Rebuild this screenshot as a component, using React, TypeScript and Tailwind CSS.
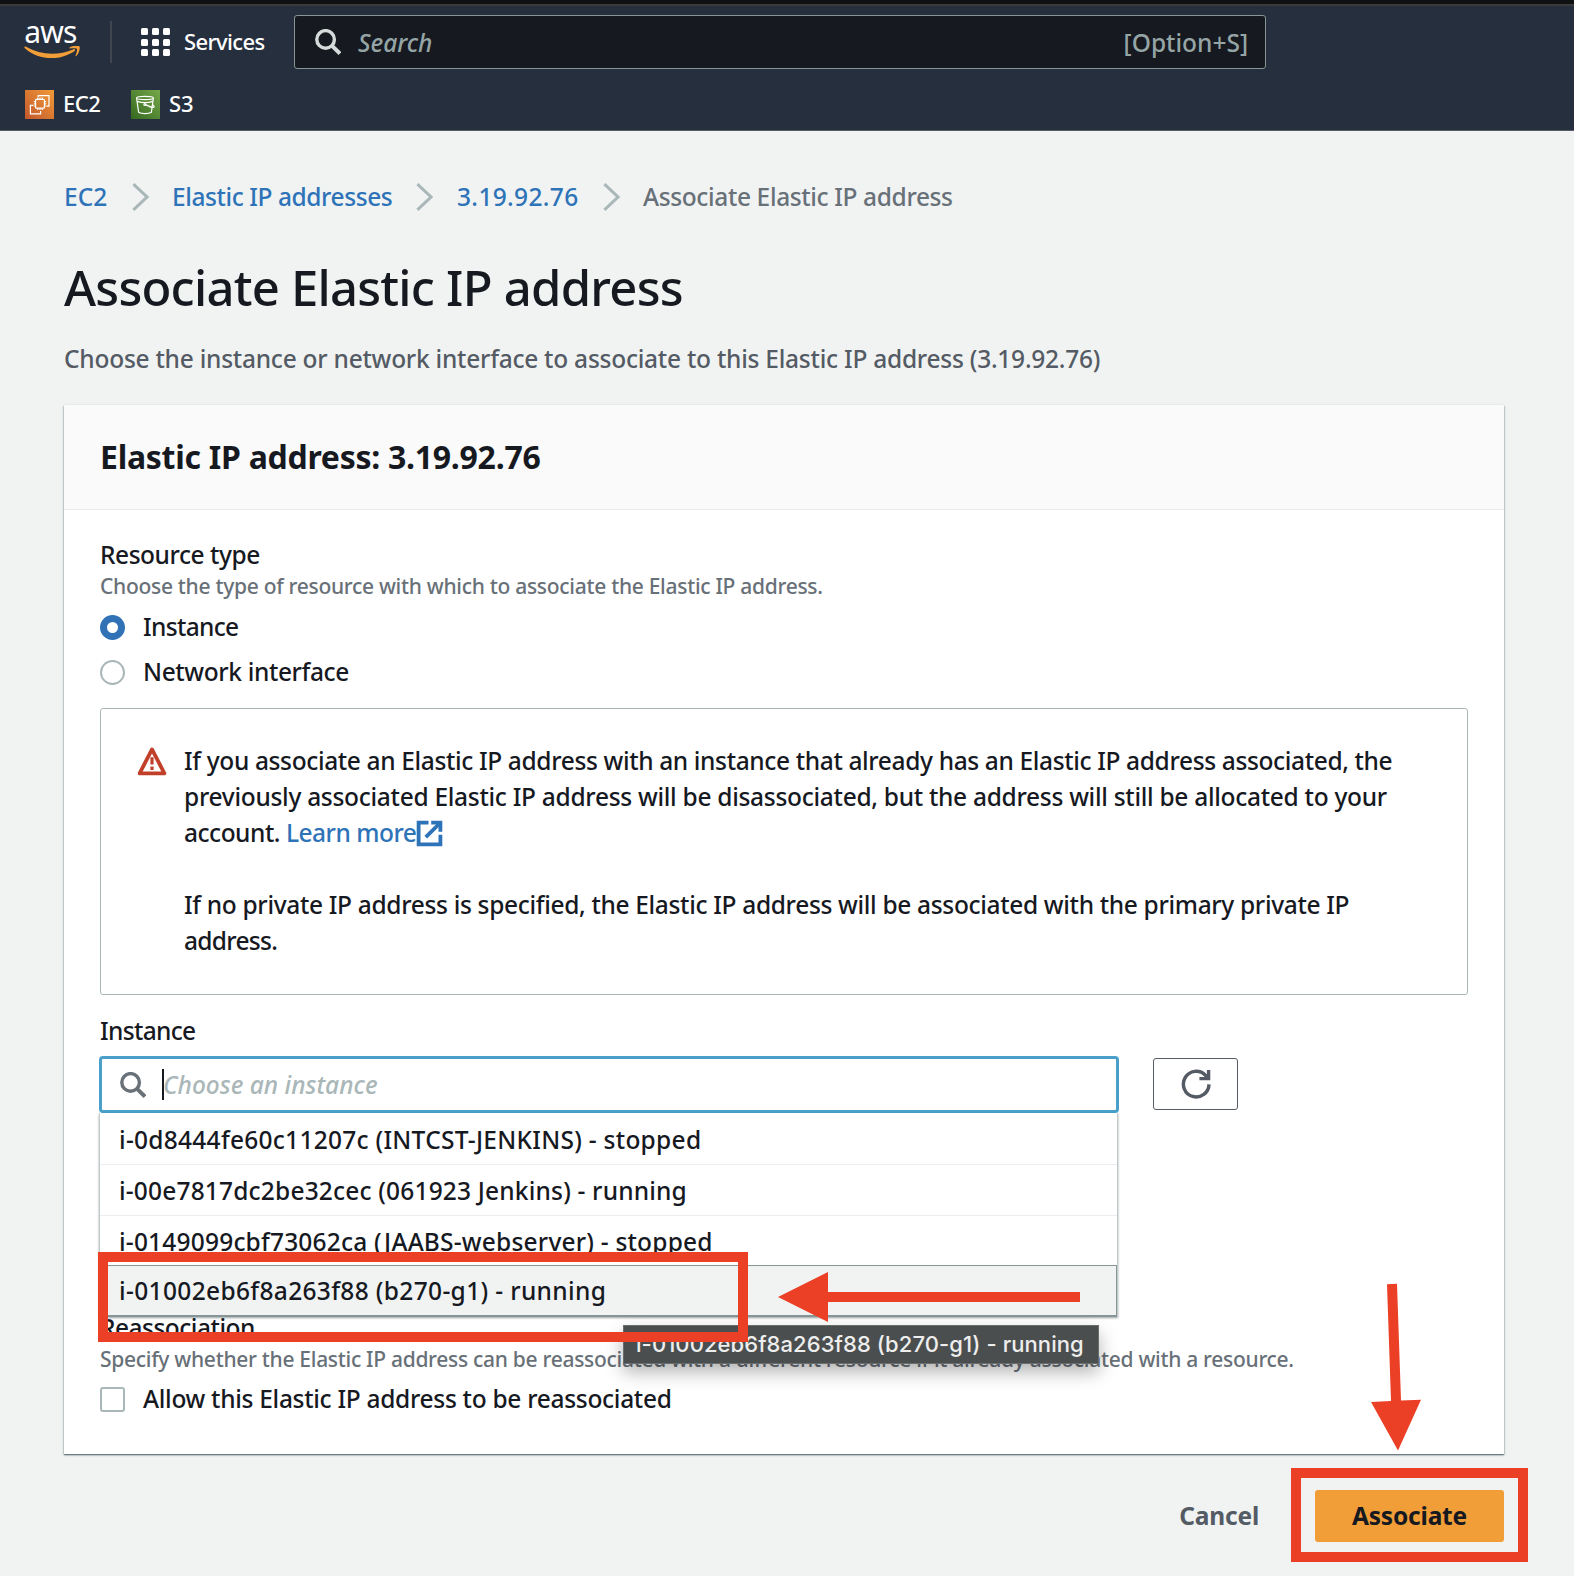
import type { ReactNode } from "react";

const instances = [
  { label: "i-0d8444fe60c11207c (INTCST-JENKINS) - stopped", style: "h-[52px] border-b border-[#eaeded] pt-[3px] tracking-[0.27px]" },
  { label: "i-00e7817dc2be32cec (061923 Jenkins) - running", style: "h-[51px] border-b border-[#eaeded] pt-px tracking-[0.18px]" },
  { label: "i-0149099cbf73062ca (JAABS-webserver) - stopped", style: "h-[49px] pt-0.5 tracking-[0.2px]" },
];

function SearchIcon({ className }: { className: string }) {
  return (
    <svg viewBox="0 0 26 26" className={className} fill="none" stroke="currentColor">
      <circle cx="10.6" cy="10.4" r="8.8" strokeWidth="3.4" />
      <path d="M16.8 16.6 L25 24.6" strokeWidth="4" />
    </svg>
  );
}

function AwsLogo() {
  return (
    <div className="flex h-9 w-14 flex-col items-center">
      <span className="mt-[-13px] -ml-[3px] h-[35px] text-[30px] leading-[42px] font-normal tracking-[-0.8px] text-white">aws</span>
      <svg viewBox="0 0 56 14" className="h-[14px] w-14 shrink-0" fill="#f19e38">
        <path d="M0.3 1.2 C0.3 0.4 1.2 0.3 2 0.8 C17 9.4 34 9.8 49.6 3.2 C51 2.7 51.8 4 50.6 4.9 C36 15.2 14.5 14.6 0.6 1.9 Z" />
        <path d="M45.6 1.4 C48.4 -0.5 54.6 -0.7 55.5 0.4 C56.4 1.5 55.2 7.6 52.2 10 C51.7 10.4 51.2 10.2 51.5 9.5 C52.2 7.8 53.6 4 52.9 3 C52.2 2.1 48.2 2.3 46.2 2.4 C45.2 2.5 44.9 1.9 45.6 1.4 Z" />
      </svg>
    </div>
  );
}

function GridIcon() {
  return (
    <div className="grid grid-cols-3 gap-x-[4px] gap-y-[3.5px]">
      {Array.from({ length: 9 }, (_, i) => (
        <span key={i} className="size-[7px] rounded-[1.5px] bg-white" />
      ))}
    </div>
  );
}

function Ec2Icon() {
  return (
    <span className="flex size-[29px] items-center justify-center bg-linear-to-tr from-[#c2572b] to-[#f19a38]">
      <svg viewBox="0 0 29 29" className="size-[29px]" fill="none" stroke="#fff" strokeWidth="1.2">
        <rect x="10.6" y="9.4" width="8.8" height="8.8" rx="0.8" />
        <path d="M12.8 9.4V7.6M15 9.4V7.6M17.2 9.4V7.6M12.8 20V18.2M15 20V18.2M17.2 20V18.2M10.6 11.6H8.8M10.6 13.8H8.8M10.6 16H8.8M21.2 11.6H19.4M21.2 13.8H19.4M21.2 16H19.4" />
        <path d="M13.2 7V5.6H24V16.2H21.6" />
        <path d="M8.4 15.4H5.4V23.8H15.6V21" />
      </svg>
    </span>
  );
}

function S3Icon() {
  return (
    <span className="flex size-[29px] items-center justify-center bg-linear-to-tr from-[#35691f] to-[#76a84a]">
      <svg viewBox="0 0 29 29" className="size-[29px]" fill="none" stroke="#fff" strokeWidth="1.2">
        <ellipse cx="14" cy="8" rx="8.4" ry="1.6" />
        <path d="M5.6 8L7.6 22.2C10 24 18 24 20.4 22.2L22.4 8" />
        <path d="M6.2 11.4C11 13 17 13 21.8 11.4" />
        <circle cx="13.8" cy="14.4" r="0.9" />
        <path d="M14.6 14.6C18 16.4 22.6 17.8 23.2 17C23.6 16.2 22 15 21.6 14.6" />
      </svg>
    </span>
  );
}

function Chevron() {
  return (
    <svg viewBox="0 0 17 28" className="h-7 w-[17px]" fill="none" stroke="#aab7b8" strokeWidth="3">
      <path d="M1.4 1.2 L15 14 L1.4 26.8" />
    </svg>
  );
}

function Radio({ checked }: { checked?: boolean }) {
  return checked ? (
    <span className="size-[25px] rounded-full border-[7.5px] border-[#3172b7] bg-white" />
  ) : (
    <span className="size-[25px] rounded-full border-2 border-[#aab7b8] bg-white" />
  );
}

function Option({ control, children, className }: { control: ReactNode; children: ReactNode; className: string }) {
  return (
    <div className={"flex h-9 items-center gap-[18px] " + className}>
      {control}
      <span>{children}</span>
    </div>
  );
}

function Header() {
  return (
    <header className="flex h-[131px] flex-col border-b border-[#545b64] bg-[#252f3e] text-[22px] text-white">
      <div className="h-1 shrink-0 bg-[#0f1113]" />
      <div className="h-0.5 shrink-0 bg-[#3b3b3c]" />
      <div className="flex h-[72px] shrink-0 items-center pl-6">
        <AwsLogo />
        <div className="ml-[30px] h-[42px] w-0.5 bg-[#414750]" />
        <div className="ml-[29px]">
          <GridIcon />
        </div>
        <span className="ml-[14px] w-[110px] pb-[3px] font-medium tracking-[-0.65px]">Services</span>
        <div className="flex h-[54px] w-[972px] items-center rounded-[3px] border border-[#879596] bg-[#16191f] pr-[17px] pl-5 text-[24.5px] text-[#95a5a6]">
          <SearchIcon className="size-[26px] text-[#d5dbdb]" />
          <span className="ml-[17px] flex-1 pt-0.5 italic">Search</span>
          <span className="pt-0.5">[Option+S]</span>
        </div>
      </div>
      <div className="flex flex-1 items-center pl-[25px] font-medium">
        <Ec2Icon />
        <span className="ml-[9px] w-[68px] pb-[3px] tracking-[-0.5px]">EC2</span>
        <S3Icon />
        <span className="ml-[9px] pb-[3px]">S3</span>
      </div>
    </header>
  );
}

function Breadcrumbs() {
  return (
    <nav className="flex h-9 items-center text-[#2e73b8]">
      <a className="w-[68px]">EC2</a>
      <Chevron />
      <a className="ml-[23px] w-[244px] tracking-[-0.42px]">Elastic IP addresses</a>
      <Chevron />
      <a className="ml-6 w-[146px] tracking-[0.35px]">3.19.92.76</a>
      <Chevron />
      <span className="ml-[23px] tracking-[-0.37px] text-[#687078]">Associate Elastic IP address</span>
    </nav>
  );
}

function Alert() {
  return (
    <div className="mt-[18px] flex h-[287px] rounded-[3px] border border-[#aab7b8] pt-[34px] pl-[36px]">
      <svg viewBox="0 0 30 30" className="mt-[3px] size-[30px] shrink-0" fill="none" stroke="#c1402a">
        <path d="M15 3.4 L27.4 27.3 H2.6 Z" strokeWidth="3.8" strokeLinejoin="round" />
        <path d="M15 11.2 V18.4 M15 20.4 V24" strokeWidth="3.2" />
      </svg>
      <div className="ml-[17px] tracking-[-0.36px] whitespace-nowrap">
        <p>If you associate an Elastic IP address with an instance that already has an Elastic IP address associated, the</p>
        <p className="tracking-[-0.29px]">
          previously associated Elastic IP address will be disassociated, but the address will still be allocated to your
        </p>
        <p className="flex tracking-[-0.48px]">
          account.&nbsp;
          <a className="flex items-center text-[#2e73b8]">
            Learn more
            <svg viewBox="0 0 27 27" className="size-[27px]" fill="none" stroke="currentColor" strokeWidth="3.8">
              <path d="M12.5 2.6 H2.6 V24.4 H24.4 V14.8" />
              <path d="M15.2 2.6 H24.4 V11.8" />
              <path d="M24 3 L9.8 17.2" />
            </svg>
          </a>
        </p>
        <p className="mt-9 tracking-[-0.33px]">
          If no private IP address is specified, the Elastic IP address will be associated with the primary private IP
        </p>
        <p className="tracking-[-0.7px]">address.</p>
      </div>
    </div>
  );
}

function InstancePicker() {
  return (
    <div className="relative -ml-px h-[57px] w-[1020px]">
      <div className="flex h-[57px] items-center rounded-[4px] border-[3px] border-[#4aa0c8] bg-white pl-[18px]">
        <SearchIcon className="size-[26px] text-[#687078]" />
        <span className="ml-[16px] h-[31px] w-0.5 bg-[#16191f]" />
        <span className="-ml-px text-[#aab7b8] italic">Choose an instance</span>
      </div>
      <ul className="absolute top-[57px] left-0 z-10 w-[1019px] border-x border-[#c3cccc] bg-white shadow-[0_1px_2px_rgba(0,28,36,0.4)]">
        {instances.map((it) => (
          <li key={it.label} className={"flex items-center pl-[19px] " + it.style}>
            {it.label}
          </li>
        ))}
        <li className="flex h-[52px] items-center border border-b-2 border-[#879596] bg-[#f1f3f3] pl-[18px] tracking-[0.35px]">
          i-01002eb6f8a263f88 (b270-g1) - running
        </li>
      </ul>
      <div className="absolute top-[269px] left-[524px] z-10 flex h-[39px] w-[476px] items-center border border-[#6a6d6e] bg-[#4b4e4f] pl-[12px] font-[Inter] text-[22px] tracking-[0.08px] text-[#eeeeee] shadow-[0_8px_18px_rgba(0,0,0,0.3)]">
        <span className="pb-[2px] whitespace-nowrap">i-01002eb6f8a263f88 (b270-g1) - running</span>
      </div>
    </div>
  );
}

function RefreshButton() {
  return (
    <button className="mb-px ml-[34px] flex h-[52px] w-[85px] items-center justify-center rounded-[3px] border border-[#545b64]">
      <svg viewBox="0 0 30 30" className="size-[30px]" fill="none" stroke="#545b64" strokeWidth="3.4">
        <path d="M28 15.4 A12.8 12.8 0 1 1 24.4 6.2 L27 9" />
        <path d="M27.6 1 V9.6 H18.4" />
      </svg>
    </button>
  );
}

function Annotations() {
  return (
    <>
      <div className="absolute top-[1252px] left-[98px] z-20 h-[90px] w-[650px] border-10 border-[#eb4026]" />
      <svg viewBox="0 0 302 50" className="absolute top-[1272px] left-[778px] z-20 h-[50px] w-[302px]" fill="#eb4026">
        <path d="M0 25 L50 0 V20 H302 V30 H50 V50 Z" />
      </svg>
      <svg viewBox="0 0 52 168" className="absolute top-[1283px] left-[1370px] z-20 h-[168px] w-[52px]" fill="#eb4026">
        <path d="M17 1.2 L27 0.8 L31 117.4 L51 116.8 L28 167.5 L1 119 L21 118 Z" />
      </svg>
      <div className="absolute top-[1468px] left-[1291px] z-20 h-[94px] w-[237px] border-10 border-[#eb4026]" />
    </>
  );
}

export default function App() {
  return (
    <div className="relative h-[1576px] w-[1574px] overflow-hidden bg-[#f1f3f3] font-['Noto_Sans',sans-serif] text-[24.5px] leading-9 font-medium text-[#16191f]">
      <Header />
      <main className="pt-[48px] pr-[70px] pl-[64px]">
        <Breadcrumbs />
        <h1 className="mt-[42px] text-[49px] leading-[60px] font-medium tracking-[-0.76px]">Associate Elastic IP address</h1>
        <p className="mt-[24px] tracking-[-0.245px] text-[#545b64]">
          Choose the instance or network interface to associate to this Elastic IP address (3.19.92.76)
        </p>
        <section className="mt-[28px] h-[1049px] bg-white shadow-[0_1px_2px_rgba(0,28,36,0.5),0_1px_1px_rgba(0,28,36,0.3)]">
          <div className="flex h-[105px] items-center border-b border-[#eaeded] bg-[#fafafa] pl-9">
            <h2 className="text-[32px] font-bold tracking-[-0.27px]">Elastic IP address: 3.19.92.76</h2>
          </div>
          <div className="pt-[28px] pr-9 pl-9">
            <h3 className="h-[34px] leading-[34px] tracking-[-0.45px]">Resource type</h3>
            <p className="text-[21px] leading-7 tracking-[-0.29px] text-[#687078]">
              Choose the type of resource with which to associate the Elastic IP address.
            </p>
            <Option className="mt-[9px] tracking-[-0.67px]" control={<Radio checked />}>Instance</Option>
            <Option className="mt-[9px] tracking-[-0.37px]" control={<Radio />}>Network interface</Option>
            <Alert />
            <h3 className="mt-[18px] tracking-[-0.67px]">Instance</h3>
            <div className="mt-[7px] flex items-center">
              <InstancePicker />
              <RefreshButton />
            </div>
            <h3 className="mt-[197px] h-[35px] tracking-[-0.5px]">Reassociation</h3>
            <p className="text-[21px] leading-7 tracking-[-0.29px] whitespace-nowrap text-[#687078]">
              Specify whether the Elastic IP address can be reassociated with a different resource if it already associated with a resource.
            </p>
            <Option
              className="mt-2 tracking-[-0.3px]"
              control={<span className="size-[25px] rounded-[3px] border-2 border-[#aab7b8] bg-white" />}
            >
              Allow this Elastic IP address to be reassociated
            </Option>
          </div>
        </section>
        <footer className="mt-9 flex items-center justify-end font-bold">
          <button className="mr-14 pb-px tracking-[-0.2px] text-[#545b64]">Cancel</button>
          <button className="h-[52px] w-[189px] rounded-[3px] bg-[#f19e38] pb-px tracking-[-0.2px]">Associate</button>
        </footer>
      </main>
      <Annotations />
    </div>
  );
}
